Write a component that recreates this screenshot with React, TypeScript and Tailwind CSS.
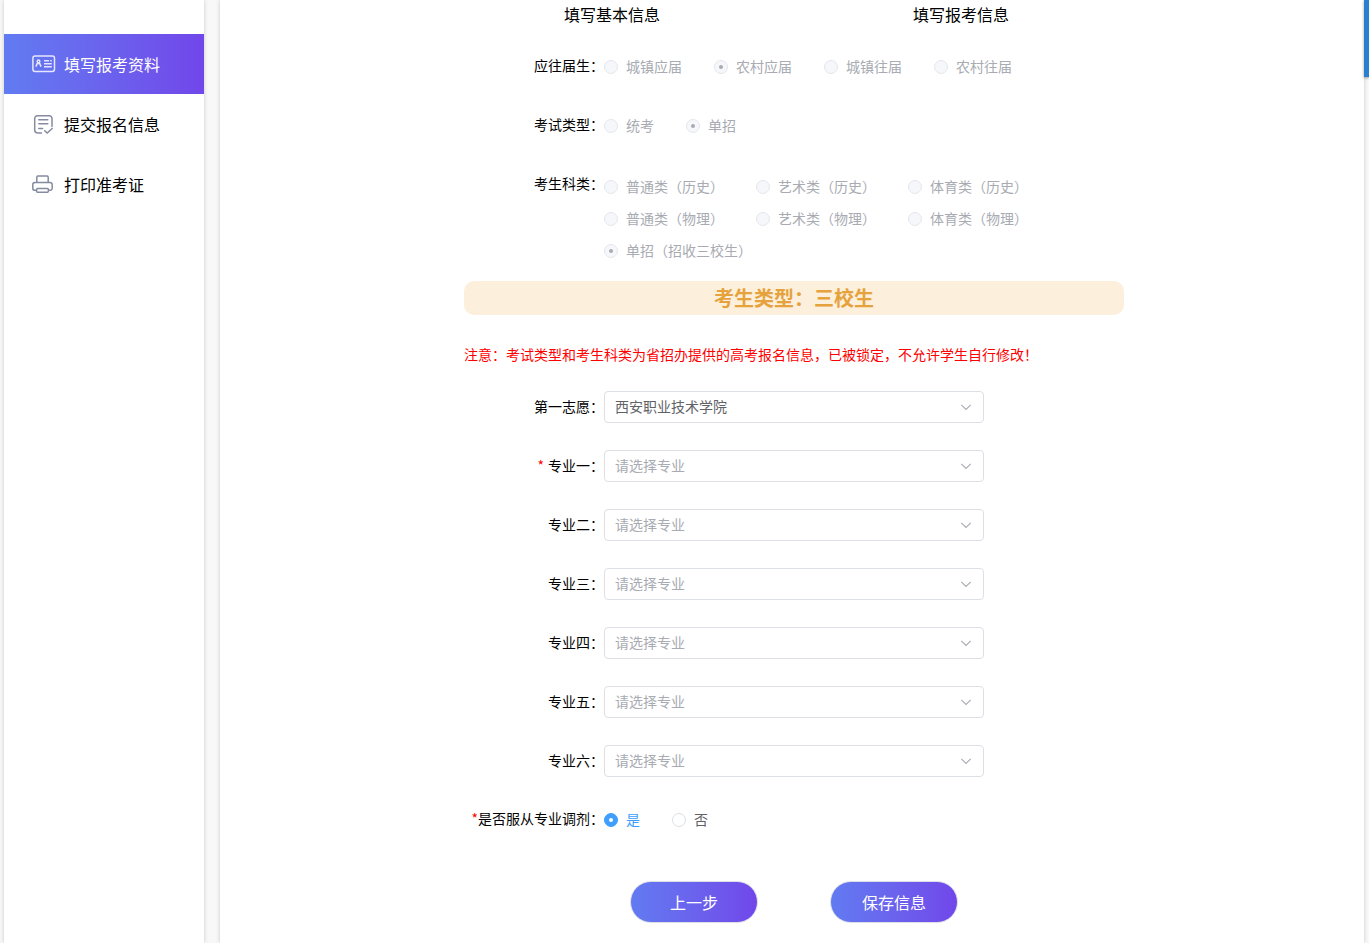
import type { ReactNode } from 'react';

type Option = { label: string; checked?: boolean };

const radioBase =
  'grid size-[14px] shrink-0 appearance-none place-content-center rounded-full border border-[#dcdfe6] bg-white before:size-1 before:rounded-full checked:border-[#409eff] checked:bg-[#409eff] checked:before:bg-white disabled:border-[#e4e7ed] disabled:bg-[#f5f7fa] disabled:checked:border-[#e4e7ed] disabled:checked:bg-[#f5f7fa] disabled:checked:before:bg-[#a8abb2]';

function RadioRow({ name, label, options, disabled, required, multiline }: {
  name: string;
  label: string;
  options: Option[];
  disabled?: boolean;
  required?: boolean;
  multiline?: boolean;
}) {
  return (
    <div className="flex items-start">
      <span id={`${name}-label`} className="w-[140px] shrink-0 text-right leading-7">
        {required && <span className="text-[#f00]">*</span>}
        {`${label}：`}
      </span>
      <div
        role="radiogroup"
        aria-labelledby={`${name}-label`}
        className={multiline ? 'flex flex-1 flex-wrap gap-x-8 pt-[2px]' : 'flex flex-1 flex-wrap gap-x-8'}
      >
        {options.map((o) => (
          <label
            key={o.label}
            className={
              disabled
                ? 'flex h-8 items-center gap-2 text-[#a8abb2]'
                : 'flex h-8 items-center gap-2 text-[#606266] has-checked:text-[#409eff]'
            }
          >
            <input type="radio" name={name} defaultChecked={o.checked} disabled={disabled} className={radioBase} />
            <span className="pb-[2px]">{o.label}</span>
          </label>
        ))}
      </div>
    </div>
  );
}

function SelectRow({ id, label, value, required }: { id: string; label: string; value?: string; required?: boolean }) {
  return (
    <div className="flex items-start">
      <label htmlFor={id} className="w-[140px] shrink-0 text-right leading-[30px]">
        {required && <span className="mr-1 text-[#f00]">*</span>}
        {`${label}：`}
      </label>
      <div className="relative w-[380px]">
        <select
          id={id}
          className={
            value
              ? 'block h-8 w-full appearance-none rounded border border-[#dcdfe6] bg-white px-[10px] pb-[2px] text-[#606266]'
              : 'block h-8 w-full appearance-none rounded border border-[#dcdfe6] bg-white px-[10px] pb-[2px] text-[#a8abb2]'
          }
        >
          <option>{value ?? '请选择专业'}</option>
        </select>
        <svg
          viewBox="0 0 12 8"
          className="pointer-events-none absolute top-3 right-3 h-2 w-3 fill-none stroke-[#a8abb2]"
          aria-hidden="true"
        >
          <path strokeWidth="1.1" d="M1.3 1.8 6 6.400 10.700 1.800" />
        </svg>
      </div>
    </div>
  );
}

function CardIcon() {
  return (
    <svg width="24" height="24" viewBox="0 0 24 24" fill="none" stroke="#e6e6ff" strokeWidth="1.5" aria-hidden="true">
      <rect x="0.9" y="3.9" width="21.6" height="15.6" rx="2.2" />
      <path d="M3.9 14.6 5.200 11.400M9 14.600 7.700 11.400M5.200 11.500h2.500" />
      <circle cx="6.5" cy="9.400" r="1.300" />
      <path d="M12 8.700h5M18.200 8.700h1.600M12 11.700h7.800M12 14.700h7.800" />
    </svg>
  );
}

function DocIcon() {
  return (
    <svg width="24" height="24" viewBox="0 0 24 24" fill="none" stroke="#858ba0" strokeWidth="1.5" strokeLinecap="round" aria-hidden="true">
      <path d="M9.500 20.900H5.500a2.800 2.800 0 0 1-2.800-2.800V6.500a2.800 2.800 0 0 1 2.800-2.800h11.700A2.800 2.800 0 0 1 20 6.500v8" />
      <path d="M6.800 7.700h9M6.800 11.800h9M6.800 16.500h3.800M12.600 18.800l2.600 2.300 5-4.600" />
    </svg>
  );
}

function PrinterIcon() {
  return (
    <svg width="24" height="24" viewBox="0 0 24 24" fill="none" stroke="#858ba0" strokeWidth="1.5" strokeLinejoin="round" aria-hidden="true">
      <path d="M4.800 10.500V5.200c0-.7.4-1.100 1.100-1.100h9.200c.7 0 1.100.4 1.100 1.100v5.300" />
      <path d="M4.600 18.300H2.900A2.100 2.100 0 0 1 .8 16.200v-3.600a2.100 2.100 0 0 1 2.100-2.100h15.200a2.100 2.100 0 0 1 2.100 2.100v3.600a2.100 2.100 0 0 1-2.100 2.100h-1.700" />
      <rect x="4.600" y="16.500" width="11.800" height="3.700" rx="1" />
    </svg>
  );
}

function NavItem({ icon, text, active }: { icon: ReactNode; text: string; active?: boolean }) {
  return (
    <a
      href="#"
      aria-current={active ? 'page' : undefined}
      className={
        active
          ? 'flex h-[60px] items-center gap-2 bg-linear-to-r from-[#617bf1] to-[#7146ea] pl-7 text-base text-white'
          : 'flex h-[60px] items-center gap-2 pl-7 text-base text-black'
      }
    >
      {icon}
      <span>{text}</span>
    </a>
  );
}

const majors = ['专业一', '专业二', '专业三', '专业四', '专业五', '专业六'];

export default function App() {
  const button =
    'h-[42px] w-32 rounded-full border border-[#dcdfe6] bg-linear-to-r from-[#617bf1] to-[#7146ea] bg-origin-border text-base text-white';
  return (
    <div
      lang="zh-CN"
      className="flex min-h-screen bg-[#f8f8f8] pl-1 font-['Noto_Sans_CJK_SC',sans-serif] text-sm text-black"
    >
      <nav className="mr-4 w-[200px] shrink-0 bg-white pt-[34px] shadow-[0_0_4px_rgba(0,0,0,0.2)]">
        <NavItem active icon={<CardIcon />} text="填写报考资料" />
        <NavItem icon={<DocIcon />} text="提交报名信息" />
        <NavItem icon={<PrinterIcon />} text="打印准考证" />
      </nav>

      <main className="min-w-0 flex-1 bg-white pt-[2px] pb-5 pl-1 shadow-[0_0_4px_rgba(0,0,0,0.2)]">
        <form className="mx-auto w-[660px]">
          <div className="flex h-6 gap-[253px] pl-[100px] text-base">
            <span>填写基本信息</span>
            <span>填写报考信息</span>
          </div>

          <div className="mt-[25px] flex flex-col gap-[27px]">
            <RadioRow
              name="graduate"
              label="应往届生"
              disabled
              options={[
                { label: '城镇应届' },
                { label: '农村应届', checked: true },
                { label: '城镇往届' },
                { label: '农村往届' },
              ]}
            />
            <RadioRow name="exam" label="考试类型" disabled options={[{ label: '统考' }, { label: '单招', checked: true }]} />
            <RadioRow
              name="subject"
              label="考生科类"
              disabled
              multiline
              options={[
                { label: '普通类（历史）' },
                { label: '艺术类（历史）' },
                { label: '体育类（历史）' },
                { label: '普通类（物理）' },
                { label: '艺术类（物理）' },
                { label: '体育类（物理）' },
                { label: '单招（招收三校生）', checked: true },
              ]}
            />
          </div>

          <div className="mt-[14px] h-[34px] rounded-[10px] bg-[#fcf0dc] text-center text-xl leading-[34px] font-bold text-[#e6a23c]">
            考生类型：三校生
          </div>
          <p className="mt-[27px] leading-6 text-[#f00]">
            注意：考试类型和考生科类为省招办提供的高考报名信息，已被锁定，不允许学生自行修改！
          </p>

          <div className="mt-[25px] flex flex-col gap-[27px]">
            <SelectRow id="school" label="第一志愿" value="西安职业技术学院" />
            {majors.map((m, i) => (
              <SelectRow key={m} id={`major-${i + 1}`} label={m} required={i === 0} />
            ))}
            <RadioRow name="adjust" label="是否服从专业调剂" required options={[{ label: '是', checked: true }, { label: '否' }]} />
          </div>

          <div className="mt-[45px] flex justify-center gap-[72px]">
            <button type="button" className={button}>上一步</button>
            <button type="button" className={button}>保存信息</button>
          </div>
        </form>
      </main>

      <div className="w-[5px] shrink-0">
        <div className="h-[77px] bg-[#2b7fd0] shadow-[0_1px_3px_rgba(0,0,0,0.4)]" />
      </div>
    </div>
  );
}
